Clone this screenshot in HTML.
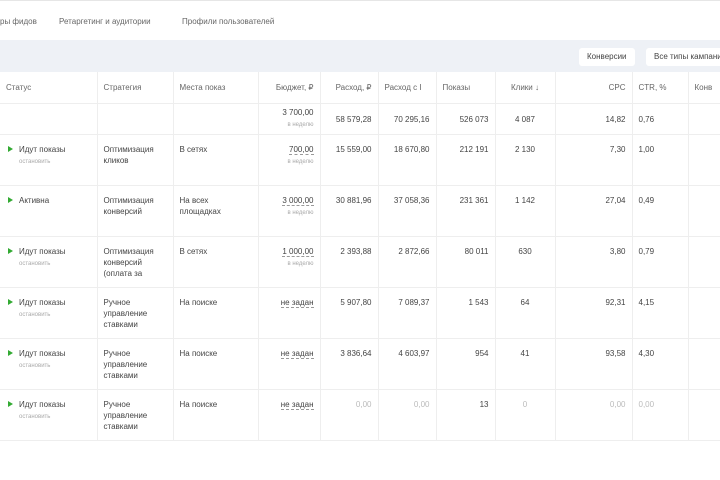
<!DOCTYPE html>
<html><head><meta charset="utf-8"><style>
body{margin:0;width:720px;height:480px;overflow:hidden;background:#fff;font-family:"Liberation Sans",sans-serif;color:#444;font-size:8px}
.top{position:absolute;left:0;top:0;width:720px;height:40px;border-top:1px solid #e6e6e6}
.tab{position:absolute;top:16px;font-size:8px;color:#666}
.band{position:absolute;left:0;top:40px;width:720px;height:32px;background:#eef1f6}
.btn{position:absolute;top:48px;height:18px;line-height:18px;background:#fff;border-radius:3px;padding:0 8px;font-size:8px;color:#444}
table{position:absolute;left:0;top:72px;border-collapse:collapse;table-layout:fixed;width:740px}
td{border-right:1px solid #eee;border-bottom:1px solid #eee;vertical-align:top;padding:0 6px;line-height:11px}
tr.h td{height:31px;vertical-align:middle;color:#666}
tr.t td{height:30px;vertical-align:middle}
tr.r td{height:51px;padding-top:9px;box-sizing:border-box}
.r1{text-align:right}.c{text-align:center}
.s{font-size:6px;color:#aaa}
.u{border-bottom:1px dashed #999}
.g{color:#bbb}
.pl{display:inline-block;width:0;height:0;border-left:5px solid #3a3;border-top:3px solid transparent;border-bottom:3px solid transparent;margin:0 6px 0 2px}
</style></head><body>
<div class="top">
<span class="tab" style="left:0">ры фидов</span>
<span class="tab" style="left:59px">Ретаргетинг и аудитории</span>
<span class="tab" style="left:182px">Профили пользователей</span>
</div>
<div class="band"></div>
<div class="btn" style="left:579px">Конверсии</div>
<div class="btn" style="left:646px;width:80px">Все типы кампаний</div>
<table>
<colgroup><col style="width:97px"><col style="width:76px"><col style="width:85px"><col style="width:62px"><col style="width:58px"><col style="width:58px"><col style="width:59px"><col style="width:60px"><col style="width:77px"><col style="width:56px"><col style="width:52px"></colgroup>
<tr class="h"><td>Статус</td><td>Стратегия</td><td>Места показ</td><td class="r1">Бюджет, ₽</td><td class="r1">Расход, ₽</td><td>Расход с I</td><td>Показы</td><td class="c">Клики ↓</td><td class="r1">CPC</td><td>CTR, %</td><td>Конв</td></tr>
<tr class="t"><td></td><td></td><td></td><td class="r1">3 700,00<br><span class="s">в неделю</span></td><td class="r1">58 579,28</td><td class="r1">70 295,16</td><td class="r1">526 073</td><td class="c">4 087</td><td class="r1">14,82</td><td>0,76</td><td></td></tr>
<tr class="r"><td><span class="pl"></span>Идут показы<br><span class="s" style="padding-left:13px">остановить</span></td><td>Оптимизация кликов</td><td>В сетях</td><td class="r1"><span class="u">700,00</span><br><span class="s">в неделю</span></td><td class="r1">15 559,00</td><td class="r1">18 670,80</td><td class="r1">212 191</td><td class="c">2 130</td><td class="r1">7,30</td><td>1,00</td><td></td></tr>
<tr class="r"><td><span class="pl"></span>Активна</td><td>Оптимизация конверсий</td><td>На всех площадках</td><td class="r1"><span class="u">3 000,00</span><br><span class="s">в неделю</span></td><td class="r1">30 881,96</td><td class="r1">37 058,36</td><td class="r1">231 361</td><td class="c">1 142</td><td class="r1">27,04</td><td>0,49</td><td></td></tr>
<tr class="r"><td><span class="pl"></span>Идут показы<br><span class="s" style="padding-left:13px">остановить</span></td><td>Оптимизация конверсий (оплата за</td><td>В сетях</td><td class="r1"><span class="u">1 000,00</span><br><span class="s">в неделю</span></td><td class="r1">2 393,88</td><td class="r1">2 872,66</td><td class="r1">80 011</td><td class="c">630</td><td class="r1">3,80</td><td>0,79</td><td></td></tr>
<tr class="r"><td><span class="pl"></span>Идут показы<br><span class="s" style="padding-left:13px">остановить</span></td><td>Ручное управление ставками</td><td>На поиске</td><td class="r1"><span class="u">не задан</span></td><td class="r1">5 907,80</td><td class="r1">7 089,37</td><td class="r1">1 543</td><td class="c">64</td><td class="r1">92,31</td><td>4,15</td><td></td></tr>
<tr class="r"><td><span class="pl"></span>Идут показы<br><span class="s" style="padding-left:13px">остановить</span></td><td>Ручное управление ставками</td><td>На поиске</td><td class="r1"><span class="u">не задан</span></td><td class="r1">3 836,64</td><td class="r1">4 603,97</td><td class="r1">954</td><td class="c">41</td><td class="r1">93,58</td><td>4,30</td><td></td></tr>
<tr class="r"><td><span class="pl"></span>Идут показы<br><span class="s" style="padding-left:13px">остановить</span></td><td>Ручное управление ставками</td><td>На поиске</td><td class="r1"><span class="u">не задан</span></td><td class="r1 g">0,00</td><td class="r1 g">0,00</td><td class="r1">13</td><td class="c g">0</td><td class="r1 g">0,00</td><td class="g">0,00</td><td></td></tr>
</table>
</body></html>
